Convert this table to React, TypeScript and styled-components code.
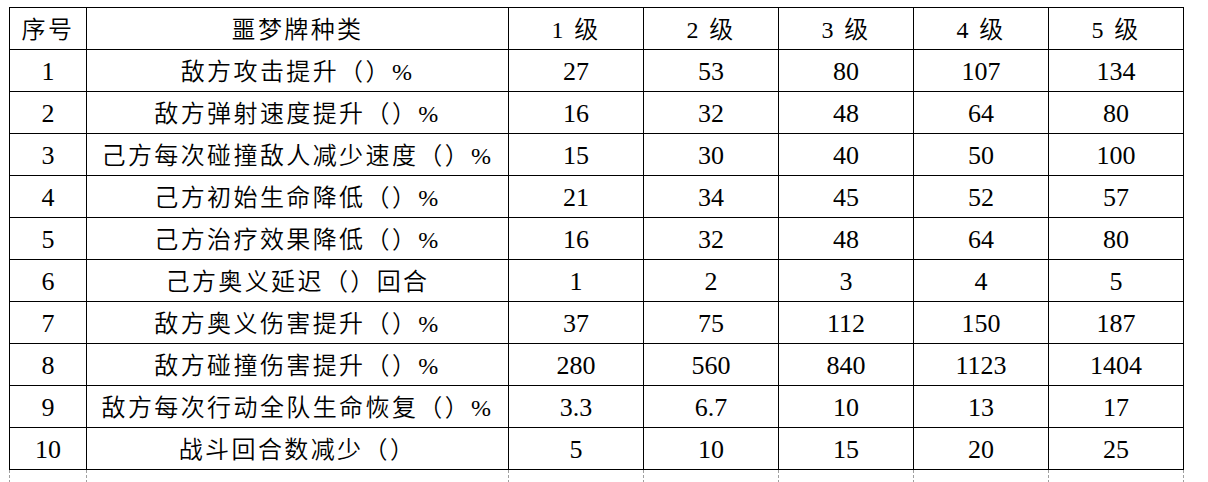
import styled, { createGlobalStyle } from "styled-components";

const GlobalStyle = createGlobalStyle`
	html, body {
		margin: 0;
		padding: 0;
		background: #ffffff;
	}
`;

const Page = styled.div`
	padding: 7px 0 0 9px;
	width: 1208px;
	height: 482px;
	box-sizing: border-box;
	overflow: hidden;
	background: #ffffff;
	font-family: "Liberation Serif", "Noto Sans CJK SC", serif;
	color: #000000;
`;

const Table = styled.table`
	border-collapse: collapse;
	table-layout: fixed;
	width: 1175px;
`;

const Row = styled.tr`
	height: 42px;
`;

const Cell = styled.td<{ $num?: boolean }>`
	border: 1px solid #000000;
	padding: 2px 0 0 0;
	text-align: center;
	vertical-align: middle;
	white-space: nowrap;
	font-size: ${(p) => (p.$num ? "26px" : "24px")};
	font-weight: 350;
	letter-spacing: ${(p) => (p.$num ? "0" : "2.4px")};
	line-height: 1;
`;

const FillerRow = styled.tr`
	height: 13px;
`;

const FillerCell = styled.td`
	border-left: 1px dashed #a0a0a0;
	border-right: 1px dashed #a0a0a0;
	border-top: 1px solid #000000;
	padding: 0;
`;

const levels = ["1 级", "2 级", "3 级", "4 级", "5 级"];

const rows: [string, string[]][] = [
	["敌方攻击提升（）%", ["27", "53", "80", "107", "134"]],
	["敌方弹射速度提升（）%", ["16", "32", "48", "64", "80"]],
	["己方每次碰撞敌人减少速度（）%", ["15", "30", "40", "50", "100"]],
	["己方初始生命降低（）%", ["21", "34", "45", "52", "57"]],
	["己方治疗效果降低（）%", ["16", "32", "48", "64", "80"]],
	["己方奥义延迟（）回合", ["1", "2", "3", "4", "5"]],
	["敌方奥义伤害提升（）%", ["37", "75", "112", "150", "187"]],
	["敌方碰撞伤害提升（）%", ["280", "560", "840", "1123", "1404"]],
	["敌方每次行动全队生命恢复（）%", ["3.3", "6.7", "10", "13", "17"]],
	["战斗回合数减少（）", ["5", "10", "15", "20", "25"]],
];

export default function App() {
	return (
		<>
			<GlobalStyle />
			<Page>
				<Table>
					<colgroup>
						<col style={{ width: 77 }} />
						<col style={{ width: 422 }} />
						{levels.map((l) => (
							<col key={l} style={{ width: 135 }} />
						))}
					</colgroup>
					<tbody>
						<Row>
							<Cell>序号</Cell>
							<Cell>噩梦牌种类</Cell>
							{levels.map((l) => (
								<Cell key={l}>{l}</Cell>
							))}
						</Row>
						{rows.map(([name, values], i) => (
							<Row key={name}>
								<Cell $num>{i + 1}</Cell>
								<Cell>{name}</Cell>
								{values.map((v, j) => (
									<Cell $num key={j}>
										{v}
									</Cell>
								))}
							</Row>
						))}
						<FillerRow>
							{Array.from({ length: 7 }).map((_, i) => (
								<FillerCell key={i} />
							))}
						</FillerRow>
					</tbody>
				</Table>
			</Page>
		</>
	);
}
